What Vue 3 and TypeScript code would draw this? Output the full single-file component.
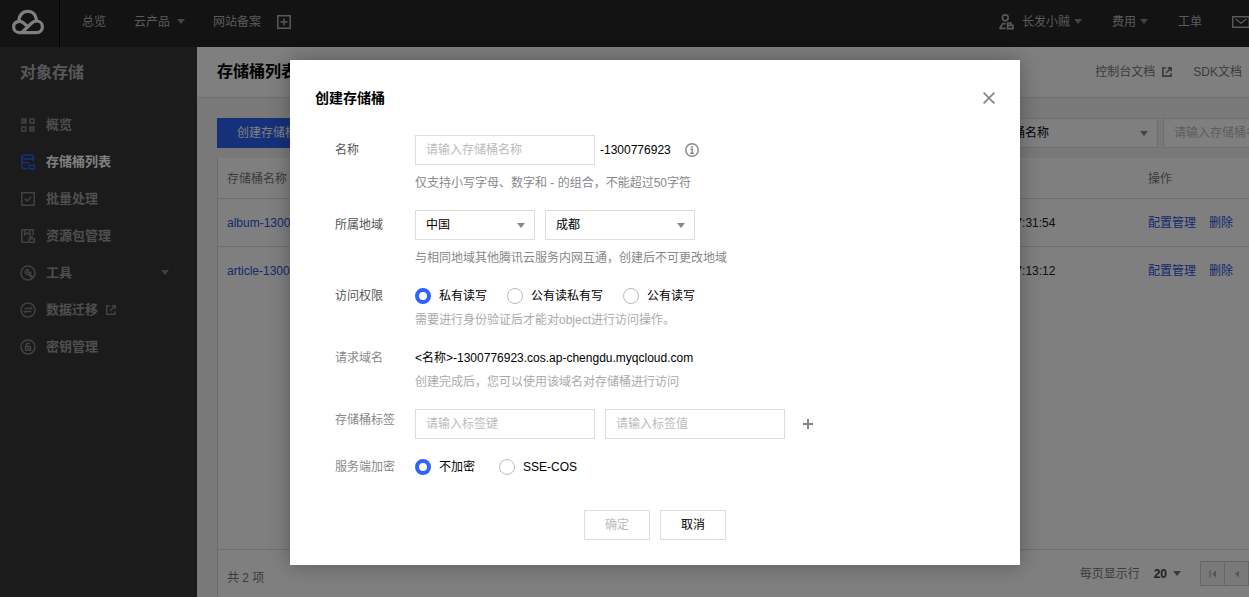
<script setup lang="ts">
import { ref } from 'vue'

interface MenuItem {
  name: string
  icon: string
  active?: boolean
  expandable?: boolean
  external?: boolean
}

interface Bucket {
  name: string
  created: string
}

interface Option {
  value: string
  text: string
}

const menu: MenuItem[] = [
  { name: '概览', icon: 'grid' },
  { name: '存储桶列表', icon: 'bucket', active: true },
  { name: '批量处理', icon: 'batch' },
  { name: '资源包管理', icon: 'package' },
  { name: '工具', icon: 'tool', expandable: true },
  { name: '数据迁移', icon: 'migrate', external: true },
  { name: '密钥管理', icon: 'key' },
]

const appId = '1300776923'

const buckets: Bucket[] = [
  { name: `album-${appId}`, created: '2019-12-01 17:31:54' },
  { name: `article-${appId}`, created: '2019-12-01 17:13:12' },
]

const accessOptions: Option[] = [
  { value: 'private', text: '私有读写' },
  { value: 'public-read', text: '公有读私有写' },
  { value: 'public', text: '公有读写' },
]

const encryptOptions: Option[] = [
  { value: 'none', text: '不加密' },
  { value: 'sse', text: 'SSE-COS' },
]

const access = ref('private')
const encrypt = ref('none')
</script>

<template>
  <div class="viewport">
    <div class="console">
      <header class="topbar">
        <a class="logo" href="#" aria-label="云控制台">
          <svg width="34" height="26" viewBox="0 0 34 26" fill="none" stroke="currentColor" stroke-width="3.2" stroke-linejoin="round" stroke-linecap="round">
            <path d="M15.5 16.5 L12.5 14 C10.8 12.6 9.6 12.2 8 12.4 C5 12.8 2.6 14.6 2.6 17.8 C2.6 21.2 5.2 23.6 8.4 23.6 H25.4 C28.9 23.6 31.4 21.2 31.4 17.8 C31.4 14.4 28.8 12 25.4 12 C23.2 12 21.8 13 20.2 14.5 L11.4 23" />
            <path d="M8 12 C7.8 6.4 11.6 2.4 16.6 2.4 C20.8 2.4 24 5 25 8.8 L25.5 12" />
          </svg>
        </a>
        <nav class="topnav">
          <a href="#">总览</a>
          <a href="#">云产品<i class="caret"></i></a>
          <span class="pinned">
            <a href="#">网站备案</a>
            <button class="icon-btn" type="button" aria-label="添加">
              <svg width="14" height="14" viewBox="0 0 14 14" fill="none" stroke="currentColor" stroke-width="1.5">
                <path d="M.8 .8 H13.2 V13.2 H.8 Z M7 3.5 V10.5 M3.5 7 H10.5" />
              </svg>
            </button>
          </span>
        </nav>
        <nav class="account">
          <a href="#" class="user">
            <svg width="15" height="16" viewBox="0 0 15 16" fill="none" stroke="currentColor" stroke-width="1.6">
              <circle cx="6.3" cy="3.8" r="2.9" />
              <path d="M6.5 9.6 H4 L1.2 13.2 V14.4 H6.5" />
              <path d="M8.6 11.4 V14.6 H14 V11.4 Z M8.6 11.4 V9 H12 V11.4" />
            </svg>
            <span>长发小贼</span><i class="caret"></i>
          </a>
          <a href="#">费用<i class="caret"></i></a>
          <a href="#">工单</a>
          <a href="#" aria-label="消息">
            <svg width="18" height="12" viewBox="0 0 18 12" fill="none" stroke="currentColor" stroke-width="1.4">
              <path d="M.7 .7 H17.3 V11.3 H.7 Z M3.6 3 L9 7.2 L14.4 3" />
            </svg>
          </a>
        </nav>
      </header>

      <div class="body">
        <aside class="sidebar">
          <h2>对象存储</h2>
          <ul>
            <li v-for="item in menu" :key="item.name">
              <a href="#" :class="{ active: item.active }">
                <svg width="16" height="16" viewBox="0 0 16 16" fill="none" stroke="currentColor" stroke-width="1.5">
                  <template v-if="item.icon === 'grid'">
                    <path d="M1.8 2 H5.8 V6 H1.8 Z M10 2 H14 V6 H10 Z M1.8 10 H5.8 V14 H1.8 Z M10 10 H14 V14 H10 Z" />
                    <path d="M3 4 H5 M11 12 H13" />
                  </template>
                  <template v-else-if="item.icon === 'bucket'">
                    <ellipse cx="7.5" cy="3" rx="5.7" ry="2.2" />
                    <path d="M1.8 3 V12.6 C1.8 14 3.8 14.8 7 14.8 M13.2 3 V7.5 M1.8 7 C2.4 8.6 6.5 9 9 8.6" />
                    <path d="M8.5 11 H15 M9 11 V14.8 H14.5 V11" />
                  </template>
                  <template v-else-if="item.icon === 'batch'">
                    <path d="M1.8 1.8 H14.2 V14.2 H1.8 Z M4.8 7.6 L7.2 10 L11.2 5.8" />
                  </template>
                  <template v-else-if="item.icon === 'package'">
                    <path d="M8 14.2 H1.8 V1.8 H13.2 V7 M4.8 2 V6.8 L7.4 5 L10 6.8 V2" />
                    <path d="M9.2 10.8 H14.4 V14.2 H9.2 Z M10.2 10.5 V8.8 H13" />
                  </template>
                  <template v-else-if="item.icon === 'tool'">
                    <circle cx="8" cy="8" r="7" />
                    <path d="M13 13 L9.4 9.4" stroke-width="2.4" />
                    <path d="M8.6 4.6 L7.6 7.4 L10.8 7.2 C10.8 9 9.4 10 8 9.8 C6 9.6 4.9 8 5.3 6.4 C5.8 4.8 7.2 4.2 8.6 4.6" />
                  </template>
                  <template v-else-if="item.icon === 'migrate'">
                    <circle cx="8" cy="8" r="7" />
                    <path d="M4.5 6.6 H11.5 L10.2 5.2 M11.5 9.6 H4.5 L5.8 11" />
                  </template>
                  <template v-else>
                    <circle cx="8" cy="8" r="7" />
                    <path d="M5.6 7.5 H10.4 V11.3 H5.6 Z M6.3 7.5 V5.6 C6.3 4.2 8.8 4 9.6 5 M8 8.8 V10" />
                  </template>
                </svg>
                <span>{{ item.name }}</span>
                <svg v-if="item.external" class="out" width="10" height="10" viewBox="0 0 10 10" fill="none" stroke="currentColor" stroke-width="1.4">
                  <path d="M4 .9 H.7 V9.3 H9.1 V6.2 M5.8 .7 H9.3 V4.2 M9.2 .8 L4 6" />
                </svg>
                <i v-if="item.expandable" class="caret"></i>
              </a>
            </li>
          </ul>
        </aside>

        <main class="main">
          <div class="page-head">
            <h1>存储桶列表</h1>
            <div class="docs">
              <a href="#">控制台文档
                <svg width="10" height="10" viewBox="0 0 10 10" fill="none" stroke="currentColor" stroke-width="1.7">
                  <path d="M4 1 H.9 V9.1 H9.1 V6.2 M5.8 .9 H9.1 V4.2 M9 1 L4 6" />
                </svg>
              </a>
              <a href="#">SDK文档</a>
            </div>
          </div>

          <div class="content">
            <div class="toolbar">
              <button class="primary" type="button">创建存储桶</button>
              <div class="search">
                <span class="select">
                  <select aria-label="搜索字段"><option>存储桶名称</option></select>
                  <i class="caret"></i>
                </span>
                <input type="text" aria-label="搜索" placeholder="请输入存储桶名称" />
              </div>
            </div>

            <section class="panel">
              <table>
                <colgroup>
                  <col /><col class="c-time" /><col class="c-op" />
                </colgroup>
                <thead>
                  <tr><th>存储桶名称</th><th aria-label="创建时间"></th><th>操作</th></tr>
                </thead>
                <tbody>
                  <tr v-for="b in buckets" :key="b.name">
                    <td><a href="#">{{ b.name }}</a></td>
                    <td>{{ b.created }}</td>
                    <td class="ops"><a href="#">配置管理</a><a href="#">删除</a></td>
                  </tr>
                </tbody>
              </table>
              <footer class="pager">
                <span class="total">共 2 项</span>
                <div class="paging">
                  <span>每页显示行</span>
                  <button class="size" type="button">20<i class="caret"></i></button>
                  <div class="steps">
                    <button type="button" aria-label="首页">
                      <svg width="8" height="8" viewBox="0 0 8 8" fill="currentColor"><path d="M.5 0 H1.7 V8 H.5 Z M7 .5 V7.5 L3 4 Z" /></svg>
                    </button>
                    <button type="button" aria-label="上一页">
                      <svg width="8" height="8" viewBox="0 0 8 8" fill="currentColor"><path d="M6 .5 V7.5 L2 4 Z" /></svg>
                    </button>
                  </div>
                </div>
              </footer>
            </section>
          </div>
        </main>
      </div>

      <div class="mask">
        <form class="dialog" role="dialog" aria-labelledby="dialog-title" @submit.prevent>
          <div class="dialog-head">
            <h3 id="dialog-title">创建存储桶</h3>
            <button class="icon-btn" type="button" aria-label="关闭">
              <svg width="12" height="12" viewBox="0 0 12 12" fill="none" stroke="currentColor" stroke-width="1.8">
                <path d="M.6 .6 L11.4 11.4 M11.4 .6 L.6 11.4" />
              </svg>
            </button>
          </div>

          <div class="fields">
            <div class="row tall">
              <label class="label dark" for="bucket-name">名称</label>
              <div>
                <div class="line">
                  <input id="bucket-name" type="text" placeholder="请输入存储桶名称" />
                  <span class="suffix">-{{ appId }}</span>
                  <svg class="info" width="14" height="14" viewBox="0 0 14 14" fill="none" stroke="currentColor" stroke-width="1.4">
                    <circle cx="7" cy="7" r="6.2" />
                    <path d="M5.4 6.3 H7.2 V10.2 M5.2 10.3 H8.9" />
                    <path d="M6.2 3.9 H7.9" stroke-width="1.7" />
                  </svg>
                </div>
                <p class="hint wide">仅支持小写字母、数字和 - 的组合，不能超过50字符</p>
              </div>
            </div>

            <div class="row tall">
              <label class="label dark" for="country">所属地域</label>
              <div>
                <div class="line pair">
                  <span class="select short">
                    <select id="country"><option>中国</option></select>
                    <i class="caret"></i>
                  </span>
                  <span class="select">
                    <select aria-label="城市"><option>成都</option></select>
                    <i class="caret"></i>
                  </span>
                </div>
                <p class="hint wide">与相同地域其他腾讯云服务内网互通，创建后不可更改地域</p>
              </div>
            </div>

            <div class="row">
              <span id="access-label" class="label dark">访问权限</span>
              <div>
                <div class="radios" role="radiogroup" aria-labelledby="access-label">
                  <label v-for="o in accessOptions" :key="o.value">
                    <input v-model="access" type="radio" name="access" :value="o.value" />{{ o.text }}
                  </label>
                </div>
                <p class="hint light">需要进行身份验证后才能对object进行访问操作。</p>
              </div>
            </div>

            <div class="row">
              <span class="label">请求域名</span>
              <div>
                <p>&lt;名称&gt;-{{ appId }}.cos.ap-chengdu.myqcloud.com</p>
                <p class="hint light">创建完成后，您可以使用该域名对存储桶进行访问</p>
              </div>
            </div>

            <div class="row">
              <label class="label" for="tag-key">存储桶标签</label>
              <div class="line pair">
                <input id="tag-key" type="text" placeholder="请输入标签键" />
                <input type="text" aria-label="标签值" placeholder="请输入标签值" />
                <button class="icon-btn add" type="button" aria-label="添加标签">
                  <svg width="10" height="10" viewBox="0 0 10 10" fill="none" stroke="currentColor" stroke-width="2">
                    <path d="M5 0 V10 M0 5 H10" />
                  </svg>
                </button>
              </div>
            </div>

            <div class="row">
              <span id="encrypt-label" class="label">服务端加密</span>
              <div class="radios loose" role="radiogroup" aria-labelledby="encrypt-label">
                <label v-for="o in encryptOptions" :key="o.value">
                  <input v-model="encrypt" type="radio" name="encrypt" :value="o.value" />{{ o.text }}
                </label>
              </div>
            </div>
          </div>

          <div class="actions">
            <button type="submit" disabled>确定</button>
            <button type="button">取消</button>
          </div>
        </form>
      </div>
    </div>
  </div>
</template>

<style>
body {
  margin: 0;
}
</style>

<style scoped>
.viewport,
.viewport * {
  box-sizing: border-box;
}
.viewport {
  height: 100vh;
  overflow: hidden;
  font: 12px/20px "Liberation Sans", "Noto Sans CJK SC", sans-serif;
  color: #000;
}
.viewport button,
.viewport input,
.viewport select {
  font: inherit;
  color: inherit;
}
.console {
  position: relative;
  display: flex;
  flex-direction: column;
  min-width: 1310px;
  height: 100%;
}
h1, h2, h3, p, ul {
  margin: 0;
  padding: 0;
}
ul {
  list-style: none;
}
a {
  color: inherit;
  text-decoration: none;
}
svg {
  display: block;
  flex: none;
}
.caret {
  flex: none;
  border: 4px solid transparent;
  border-top: 5px solid currentColor;
  border-bottom: 0;
}
.icon-btn {
  display: flex;
  padding: 0;
  border: 0;
  background: none;
}

/* top bar */
.topbar {
  display: flex;
  flex: none;
  height: 47px;
  background: #262626;
  color: #b4b4b4;
  padding-right: 60px;
}
.logo {
  display: flex;
  align-items: center;
  width: 60px;
  padding: 0 0 3px 11px;
  border-right: 1px solid #000;
  color: #fff;
}
.topnav,
.account {
  display: flex;
  align-items: center;
  padding-bottom: 4px;
}
.topnav {
  gap: 28px;
  padding-left: 22px;
}
.topnav a,
.account a,
.pinned {
  display: flex;
  align-items: center;
}
.topbar .caret {
  color: #888;
}
.topnav .caret {
  margin-left: 7px;
}
.pinned {
  gap: 16px;
}
.account {
  gap: 30px;
  margin-left: auto;
}
.account .caret {
  margin-left: 4px;
}
.user span {
  margin-left: 8px;
}

/* side menu */
.body {
  display: flex;
  flex: 1;
  min-height: 0;
}
.sidebar {
  flex: none;
  width: 197px;
  background: #363636;
  color: #b0b0b0;
}
.sidebar h2 {
  padding: 14px 20px 21px;
  font-size: 16px;
  line-height: 24px;
}
.sidebar li a {
  display: flex;
  align-items: center;
  height: 37px;
  padding: 0 28px 0 20px;
  font-size: 13px;
  font-weight: bold;
  color: #9c9c9c;
}
.sidebar li span {
  margin-left: 10px;
}
.sidebar li .out {
  margin-left: 8px;
}
.sidebar li .caret {
  margin-left: auto;
  color: #808080;
}
.sidebar li svg {
  color: #848484;
}
.sidebar li .active {
  color: #fff;
}
.sidebar li .active svg {
  color: #2a62f5;
}

/* page */
.main {
  display: flex;
  flex: 1;
  flex-direction: column;
  min-width: 0;
  background: #f2f2f2;
}
.page-head {
  display: flex;
  align-items: center;
  justify-content: space-between;
  height: 51px;
  padding: 0 68px 0 20px;
  background: #fff;
  border-bottom: 1px solid #ddd;
}
.page-head h1 {
  font-size: 16px;
  line-height: 24px;
}
.docs {
  display: flex;
  gap: 21px;
  color: #777;
}
.docs a {
  display: flex;
  align-items: center;
  gap: 7px;
}
.content {
  display: flex;
  flex: 1;
  flex-direction: column;
  padding: 20px 20px 0;
}
.toolbar {
  display: flex;
  justify-content: space-between;
  height: 30px;
}
.viewport .primary {
  padding: 0 20px;
  border: 0;
  background: #2a62f5;
  color: #fff;
}
.search {
  display: flex;
  gap: 5px;
  width: 312px;
}
.search input {
  flex: 1;
  min-width: 0;
}
.search .select {
  width: 180px;
}
input[type='text'],
select {
  height: 30px;
  padding: 0 10px;
  border: 1px solid #ddd;
  border-radius: 0;
  background: #fff;
}
input::placeholder {
  color: #bbb;
  opacity: 1;
}
.select {
  display: grid;
  align-items: center;
}
.select > * {
  grid-area: 1 / 1;
}
.select select {
  width: 100%;
  appearance: none;
}
.select .caret {
  justify-self: end;
  margin-right: 10px;
  color: #888;
  pointer-events: none;
}
.panel {
  display: flex;
  flex: 1;
  flex-direction: column;
  margin-top: 10px;
  background: #fff;
  border-left: 1px solid #ddd;
}
table {
  width: 100%;
  table-layout: fixed;
  border-collapse: collapse;
}
.c-time {
  width: 204px;
}
.c-op {
  width: 151px;
}
th,
td {
  height: 48px;
  padding: 2px 9px 0;
  text-align: left;
  color: #222;
}
th {
  height: 40px;
  font-weight: normal;
  color: #777;
}
tr {
  border-bottom: 1px solid #ddd;
}
tbody tr:last-child {
  border-bottom: 0;
}
td a {
  color: #2a50e0;
}
.ops a + a {
  margin-left: 13px;
}
.pager {
  display: flex;
  align-items: center;
  justify-content: space-between;
  height: 48px;
  margin-top: auto;
  padding-left: 9px;
  border-top: 1px solid #ddd;
  color: #777;
}
.total {
  padding-top: 8px;
}
.paging {
  display: flex;
  align-items: center;
  padding-right: 41px;
}
.viewport .size {
  display: flex;
  align-items: center;
  gap: 6px;
  padding: 0;
  margin: 0 19px 0 14px;
  border: 0;
  background: none;
  font-weight: bold;
  color: #444;
}
.size .caret {
  color: #777;
}
.steps {
  display: flex;
}
.viewport .steps button {
  display: flex;
  align-items: center;
  justify-content: center;
  width: 25px;
  height: 25px;
  padding: 0;
  border: 1px solid #ccc;
  background: #f2f2f2;
  color: #aaa;
}
.steps button + button {
  margin-left: -1px;
}

/* dialog */
.mask {
  position: absolute;
  inset: 0;
  display: flex;
  align-items: flex-start;
  justify-content: center;
  padding-top: 60px;
  background: rgba(0, 0, 0, 0.5);
}
.dialog {
  width: 730px;
  padding: 25px;
  background: #fff;
  box-shadow: 0 0 20px rgba(0, 0, 0, 0.3);
}
.dialog-head {
  display: flex;
  align-items: center;
  justify-content: space-between;
  height: 26px;
}
.dialog-head h3 {
  font-size: 14px;
}
.viewport .icon-btn {
  color: #888;
}
.viewport .topbar .icon-btn {
  color: #b4b4b4;
}
.fields {
  display: flex;
  flex-direction: column;
  gap: 17px;
  padding: 24px 0 0 20px;
  line-height: 22px;
}
.row {
  display: grid;
  grid-template-columns: 80px 1fr;
}
.label {
  color: #888;
}
.label.dark {
  color: #555;
}
.tall > .label {
  line-height: 30px;
}
.line {
  display: flex;
  align-items: center;
}
.pair {
  gap: 10px;
}
.line input {
  width: 180px;
}
.line .select {
  width: 150px;
}
.line .select.short {
  width: 120px;
}
.suffix {
  margin: 0 14px 0 5px;
}
.info {
  color: #888;
}
.hint {
  margin-top: 3px;
  line-height: 20px;
  color: #888;
}
.hint.wide {
  margin-top: 8px;
}
.hint.light {
  color: #aaa;
}
.radios {
  display: flex;
  gap: 20px;
}
.radios.loose {
  gap: 24px;
}
.radios label {
  display: flex;
  align-items: center;
}
.radios input {
  width: 16px;
  height: 16px;
  margin: 0 8px 0 0;
  border: 1px solid #bbb;
  border-radius: 50%;
  background: #fff;
  appearance: none;
}
.radios input:checked {
  border: 4px solid #2f62ff;
}
.add {
  margin-left: 8px;
}
.actions {
  display: flex;
  justify-content: center;
  gap: 10px;
  margin-top: 32px;
}
.actions button {
  width: 66px;
  height: 30px;
  padding: 0;
  border: 1px solid #ddd;
  background: #fff;
}
.viewport .actions button:disabled {
  color: #bbb;
}
</style>
